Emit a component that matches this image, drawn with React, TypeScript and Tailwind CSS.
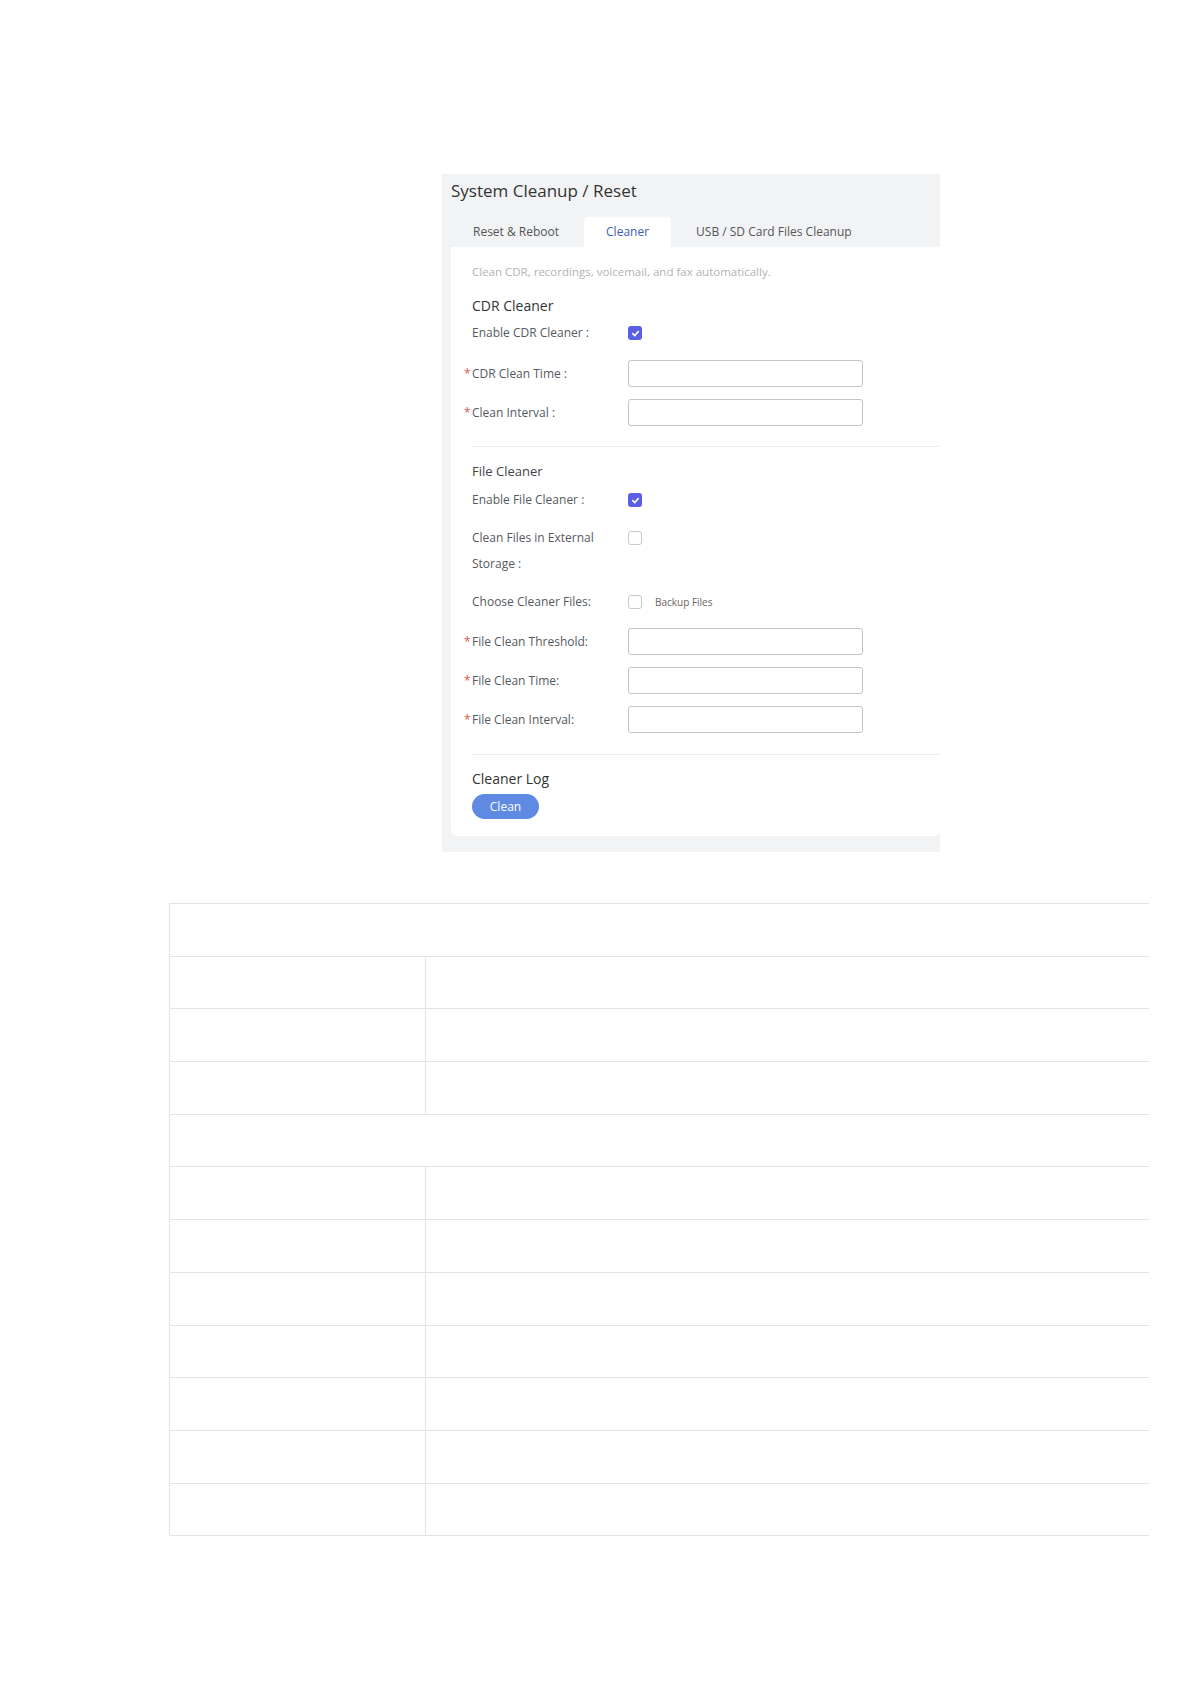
const font = { fontFamily: '"Open Sans", "Noto Sans", sans-serif' };

const Check = ({ checked }: { checked: boolean }) =>
  checked ? (
    <span className="flex h-[14px] w-[14px] items-center justify-center rounded-[3px] bg-[#5a60e6]">
      <svg width="9" height="9" viewBox="0 0 10 10">
        <path d="M2 5.2 L4.2 7.3 L8 2.9" fill="none" stroke="#fff" strokeWidth="1.8" strokeLinecap="round" strokeLinejoin="round" />
      </svg>
    </span>
  ) : (
    <span className="block h-[14px] w-[14px] rounded-[3px] border border-[#c8c8c8] bg-white" />
  );

const Label = ({ text, req }: { text: string; req?: boolean }) => (
  <div className="relative w-[156px] text-[12px] text-[#555a60]">
    {req && <span className="absolute left-[-8px] top-0 text-[#e0574f]">*</span>}
    {text}
  </div>
);

const InputRow = ({ label, mt }: { label: string; mt: string }) => (
  <div className={`flex h-[27px] items-center ${mt}`}>
    <Label text={label} req />
    <div className="h-[27px] w-[235px] rounded-[3px] border border-[#c4c4c4] bg-white" />
  </div>
);

const rows = [
  'span', 'two', 'two', 'two', 'span', 'two', 'two', 'two', 'two', 'two', 'two', 'two',
];

export default function App() {
  return (
    <div className="min-h-[1684px] w-[1190px] bg-white" style={font}>
      <div className="pt-[174px] pl-[442px]">
        <div className="w-[498px] bg-[#f2f3f5] pb-[16px]">
          <div className="h-[43px] pl-[9px] pt-[5px] text-[17px] leading-[24px] text-[#333]">
            System Cleanup / Reset
          </div>
          <div className="flex h-[30px] items-end gap-[3px] pl-[9px]">
            <div className="flex h-[30px] items-center px-[22px] text-[12px] text-[#555]">Reset &amp; Reboot</div>
            <div className="flex h-[30px] items-center rounded-t-[4px] bg-white px-[22px] text-[12px] text-[#3b5cb3]">Cleaner</div>
            <div className="flex h-[30px] items-center px-[22px] text-[12px] text-[#555]">USB / SD Card Files Cleanup</div>
          </div>
          <div className="ml-[9px] rounded-b-[6px] bg-white pl-[21px] pt-[16px] pb-[17px]">
            <div className="text-[11.5px] leading-[18px] text-[#b3b3b3]">
              Clean CDR, recordings, voicemail, and fax automatically.
            </div>
            <div className="mt-[15px] text-[14px] leading-[20px] text-[#333]">CDR Cleaner</div>
            <div className="mt-[4px] flex h-[26px] items-center">
              <Label text="Enable CDR Cleaner :" />
              <Check checked />
            </div>
            <InputRow label="CDR Clean Time :" mt="mt-[14px]" />
            <InputRow label="Clean Interval :" mt="mt-[12px]" />
            <div className="mt-[20px] h-px bg-[#ececec]" />
            <div className="mt-[14px] text-[13px] font-medium leading-[20px] text-[#444]">File Cleaner</div>
            <div className="mt-[6px] flex h-[26px] items-center">
              <Label text="Enable File Cleaner :" />
              <Check checked />
            </div>
            <div className="mt-[12px] flex items-start">
              <div className="w-[156px] text-[12px] leading-[26px] text-[#555a60]">
                Clean Files in External
                <br />
                Storage :
              </div>
              <div className="flex h-[26px] items-center">
                <Check checked={false} />
              </div>
            </div>
            <div className="mt-[12px] flex h-[26px] items-center">
              <Label text="Choose Cleaner Files:" />
              <Check checked={false} />
              <span className="ml-[13px] text-[10px] text-[#666]">Backup Files</span>
            </div>
            <InputRow label="File Clean Threshold:" mt="mt-[13px]" />
            <InputRow label="File Clean Time:" mt="mt-[12px]" />
            <InputRow label="File Clean Interval:" mt="mt-[12px]" />
            <div className="mt-[21px] h-px bg-[#ececec]" />
            <div className="mt-[14px] text-[14px] leading-[20px] text-[#333]">Cleaner Log</div>
            <button className="mt-[5px] flex h-[25px] w-[67px] items-center justify-center rounded-full bg-[#5f8ae3] text-[12px] text-white">
              Clean
            </button>
          </div>
        </div>
      </div>

      <div className="ml-[169px] mt-[51px] w-[980px] border-l border-t border-[#e4e4e4]">
        {rows.map((r, i) =>
          r === 'span' ? (
            <div key={i} className="h-[52.7px] border-b border-[#e4e4e4]" />
          ) : (
            <div key={i} className="flex h-[52.7px] border-b border-[#e4e4e4]">
              <div className="w-[256px] border-r border-[#e4e4e4]" />
              <div className="flex-1" />
            </div>
          )
        )}
      </div>
    </div>
  );
}
